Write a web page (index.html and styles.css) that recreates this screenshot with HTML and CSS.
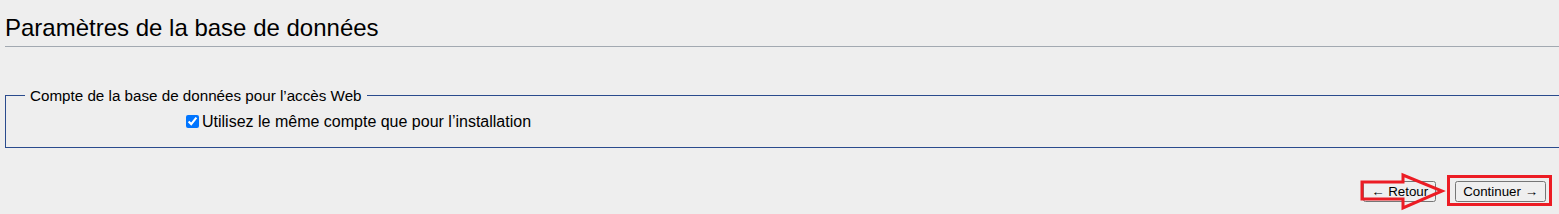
FILE: index.html
```html
<!DOCTYPE html>
<html lang="fr">
<head>
<meta charset="utf-8">
<title>Paramètres de la base de données</title>
<link rel="stylesheet" href="styles.css">
</head>
<body>
<div class="page">
  <h2 class="title">Paramètres de la base de données</h2>
  <div class="clip">
    <fieldset class="box">
      <legend class="legend">Compte de la base de données pour l’accès Web</legend>
      <div class="row">
        <label class="check"><input type="checkbox" checked>Utilisez le même compte que pour l’installation</label>
      </div>
    </fieldset>
  </div>
  <div class="actions">
    <button class="btn" type="button">← Retour</button>
    <button class="btn" type="button">Continuer →</button>
  </div>
</div>
<svg class="marks" width="1559" height="214" viewBox="0 0 1559 214" aria-hidden="true">
  <polygon points="1362,182 1403,182 1403,175 1442,191 1403,208 1403,199 1362,199" fill="none" stroke="#ec1c24" stroke-width="3" stroke-linejoin="miter"/>
  <rect x="1448.5" y="176.5" width="102" height="28" fill="none" stroke="#ec1c24" stroke-width="3"/>
</svg>
</body>
</html>
```
FILE: styles.css
```css
html, body {
  margin: 0;
  padding: 0;
  background: #eeeeee;
  overflow: hidden;
}
body {
  width: 1559px;
  height: 214px;
  position: relative;
  font-family: "Liberation Sans", Arial, sans-serif;
  color: #000;
}
.page {
  padding: 0 0 0 5px;
}
.title {
  margin: 0;
  padding-top: 13px;
  font-size: 24px;
  font-weight: normal;
  line-height: 30px;
  height: 33px;
  border-bottom: 1px solid #a2a9b1;
}
.clip {
  overflow: hidden;
  padding-top: 40px;
}
.box {
  margin: 0;
  margin-right: -20px;
  border: 1px solid #2a4b8d;
  padding: 8px 0 15px 0;
  min-width: 0;
}
.legend {
  margin-left: 19px;
  padding: 0 5px;
  font-size: 15.2px;
}
.row {
  font-size: 16px;
  line-height: 20px;
  padding-left: 180px;
}
.check input {
  margin: 0 3px 0 0;
  width: 13px;
  height: 13px;
  vertical-align: -1px;
}
.actions {
  display: flex;
  justify-content: flex-end;
  gap: 19px;
  padding: 33px 13px 0 0;
}
.btn {
  font-family: "Liberation Sans", Arial, sans-serif;
  font-size: 13.33px;
  padding: 1px 6px;
  height: 21px;
}
.marks {
  position: absolute;
  left: 0;
  top: 0;
  pointer-events: none;
}
```
